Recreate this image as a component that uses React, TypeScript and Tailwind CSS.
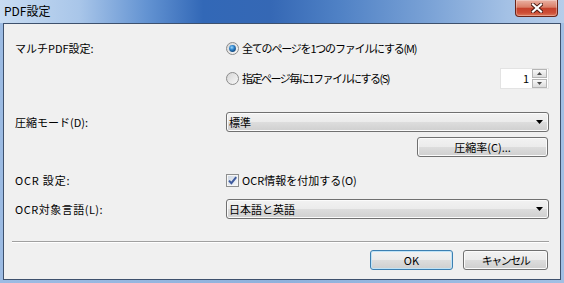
import React from "react";

function Radio({ checked }: { checked?: boolean }) {
  return (
    <svg width="13" height="13" viewBox="0 0 13 13" className="shrink-0">
      <defs>
        <linearGradient id="rbg" x1="0" y1="0" x2="1" y2="1">
          <stop offset="0" stopColor="#d4d4d4" />
          <stop offset="1" stopColor="#fafafa" />
        </linearGradient>
        <radialGradient id="rdot" cx="0.4" cy="0.35" r="0.75">
          <stop offset="0" stopColor="#9fd9fb" />
          <stop offset="0.45" stopColor="#2d83cc" />
          <stop offset="1" stopColor="#0b3766" />
        </radialGradient>
      </defs>
      <circle cx="6.5" cy="6.5" r="6" fill="url(#rbg)" stroke="#8c8c8c" />
      {checked && <circle cx="6.5" cy="6.5" r="3.4" fill="url(#rdot)" />}
    </svg>
  );
}

function Checkbox() {
  return (
    <svg width="13" height="13" viewBox="0 0 13 13" className="shrink-0">
      <defs>
        <linearGradient id="cbg" x1="0" y1="0" x2="1" y2="1">
          <stop offset="0" stopColor="#cfd8e4" />
          <stop offset="1" stopColor="#f4f6f9" />
        </linearGradient>
      </defs>
      <rect x="0.5" y="0.5" width="12" height="12" fill="#f6f6f6" stroke="#8e8f8f" />
      <rect x="2" y="2" width="9" height="9" fill="url(#cbg)" />
      <path d="M3 6.6 L5.4 9.2 L10.2 3.2" fill="none" stroke="#3f5b9e" strokeWidth="2" />
    </svg>
  );
}

function Select({ text }: { text: string }) {
  return (
    <div className="h-[20px] w-full rounded-[3px] border border-[#707070] bg-[linear-gradient(#f2f2f2,#ebebeb_50%,#dddddd_50%,#cfcfcf)] shadow-[inset_0_0_0_1px_#fbfbfb] flex items-center justify-between pl-[2px] pr-[5px]">
      <span className="leading-[14px]">{text}</span>
      <svg width="7" height="4" viewBox="0 0 7 4">
        <path d="M0 0H7L3.5 4Z" fill="#000" />
      </svg>
    </div>
  );
}

function Btn({ text, def, w }: { text: string; def?: boolean; w: string }) {
  return (
    <div
      className={
        "h-[20px] rounded-[3px] border flex items-center justify-center bg-[linear-gradient(#f2f2f2,#ebebeb_50%,#dddddd_50%,#cfcfcf)] " +
        w +
        (def
          ? " border-[#3c7fb1] shadow-[inset_0_0_0_1px_#bfe3f7]"
          : " border-[#707070] shadow-[inset_0_0_0_1px_#fbfbfb]")
      }
    >
      {text}
    </div>
  );
}

export default function App() {
  return (
    <div className="w-[564px] h-[283px] flex flex-col overflow-hidden bg-[linear-gradient(90deg,#9cbbe3,#8fb1dc_50%,#a1bfe4)] font-['Noto_Sans_CJK_JP',sans-serif] text-black">
      <div className="h-[23px] shrink-0 flex items-start justify-between bg-[linear-gradient(90deg,#c8dcf2_0%,#a9c6e9_14%,#6393d2_26%,#3268b7_36%,#3568b5_48%,#4f81c5_60%,#7aa2d6_76%,#a4c1e5_90%,#b5cdea_100%)]">
        <span className="pl-[4px] pt-[3px] text-[12px] leading-[16px]">PDF設定</span>
        <div className="mr-[6px] w-[43px] h-[17px] rounded-b-[4px] border border-t-0 border-[#6a2418] bg-[linear-gradient(#eab1a3,#da7e68_45%,#c5412c_52%,#cd4e36_80%,#de7a5d)] shadow-[inset_0_0_0_1px_rgba(255,255,255,0.3)] flex items-center justify-center">
          <svg width="12" height="10" viewBox="0 0 12 10">
            <path d="M2 1.5L10 8.5M10 1.5L2 8.5" stroke="#4a1a12" strokeWidth="4" strokeLinecap="square" />
            <path d="M2 1.5L10 8.5M10 1.5L2 8.5" stroke="#ffffff" strokeWidth="2.2" strokeLinecap="square" />
          </svg>
        </div>
      </div>
      <div className="flex-1 mx-[3px] mb-[3px] border border-[#3e516d] bg-[#f0f0f0] flex flex-col px-[11px] pt-[14px] text-[11px] leading-[14px]">
        <div className="h-[20px] grid grid-cols-[211px_1fr] items-center">
          <span>マルチPDF設定:</span>
          <div className="flex items-center gap-[3px]">
            <Radio checked />
            <span className="tracking-[-1.2px]">全てのページを1つのファイルにする(M)</span>
          </div>
        </div>
        <div className="mt-[9px] h-[22px] grid grid-cols-[211px_1fr] items-center">
          <span />
          <div className="flex items-center justify-between">
            <div className="flex items-center gap-[3px]">
              <Radio />
              <span className="tracking-[-1.5px]">指定ページ毎に1ファイルにする(S)</span>
            </div>
            <div className="h-[21px] w-[49px] bg-white border border-[#e3e3e3] flex items-center justify-end gap-[3px] pr-[1px]">
              <span>1</span>
              <div className="flex flex-col gap-px">
                <div className="w-[15px] h-[9px] border border-[#b5b5b5] bg-[linear-gradient(#f8f8f8,#dcdcdc)] flex items-center justify-center">
                  <svg width="5" height="3" viewBox="0 0 5 3"><path d="M0 3H5L2.5 0Z" fill="#4d4d4d" /></svg>
                </div>
                <div className="w-[15px] h-[9px] border border-[#b5b5b5] bg-[linear-gradient(#f8f8f8,#dcdcdc)] flex items-center justify-center">
                  <svg width="5" height="3" viewBox="0 0 5 3"><path d="M0 0H5L2.5 3Z" fill="#4d4d4d" /></svg>
                </div>
              </div>
            </div>
          </div>
        </div>
        <div className="mt-[23px] h-[20px] grid grid-cols-[211px_1fr] items-center">
          <span>圧縮モード(D):</span>
          <Select text="標準" />
        </div>
        <div className="mt-[5px] h-[20px] flex justify-end pr-[1px]">
          <Btn text="圧縮率(C)..." w="w-[131px]" />
        </div>
        <div className="mt-[13px] h-[20px] grid grid-cols-[211px_1fr] items-center">
          <span className="tracking-[0.8px]">OCR 設定:</span>
          <div className="flex items-center gap-[3px]">
            <Checkbox />
            <span>OCR情報を付加する(O)</span>
          </div>
        </div>
        <div className="mt-[9px] h-[20px] grid grid-cols-[211px_1fr] items-center">
          <span className="tracking-[0.5px]">OCR対象言語(L):</span>
          <Select text="日本語と英語" />
        </div>
        <div className="mt-[22px] h-px -ml-[3px] bg-[#a0a0a0] shadow-[0_1px_0_#ffffff]" />
        <div className="mt-[8px] h-[20px] flex justify-end gap-[10px] pr-[1px]">
          <Btn text="OK" def w="w-[83px]" />
          <Btn text="キャンセル" w="w-[85px] tracking-[-1.5px]" />
        </div>
      </div>
    </div>
  );
}
